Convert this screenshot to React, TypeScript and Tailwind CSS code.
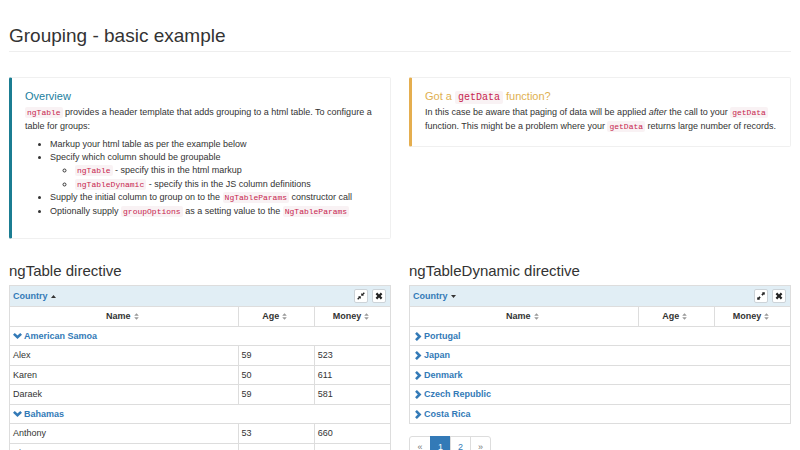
import { ReactNode } from 'react'
import clsx from 'clsx'

type Person = { name: string; age: number; money: number }
type Group = { name: string; people: Person[] }

const expandedGroups: Group[] = [
  {
    name: 'American Samoa',
    people: [
      { name: 'Alex', age: 59, money: 523 },
      { name: 'Karen', age: 50, money: 611 },
      { name: 'Daraek', age: 59, money: 581 },
    ],
  },
  {
    name: 'Bahamas',
    people: [
      { name: 'Anthony', age: 53, money: 660 },
      { name: 'Simon', age: 43, money: 675 },
    ],
  },
]

const collapsedGroups: Group[] = ['Portugal', 'Japan', 'Denmark', 'Czech Republic', 'Costa Rica'].map((name) => ({
  name,
  people: [],
}))

function Code({ children, large }: { children: ReactNode; large?: boolean }) {
  return (
    <code
      className={clsx(
        "rounded-[2px] bg-[#f9f2f4] py-px font-['Liberation_Mono',monospace] leading-none text-[#c7254e]",
        large ? 'px-[3px] text-[10px]' : 'px-[2px] text-[8px]',
      )}
    >
      {children}
    </code>
  )
}

function Callout({ title, tone, children }: { title: ReactNode; tone: 'info' | 'warning'; children: ReactNode }) {
  return (
    <section
      className={clsx(
        'self-start rounded-[2px] border border-l-3 border-[#f0f0f0] pt-[11px] pr-2 pl-[13px]',
        tone === 'info' ? 'border-l-[#1b7d92] pb-5' : 'border-l-[#e5ae4f] pb-[13px]',
      )}
    >
      <h4 className={clsx('text-[11px] leading-[14px]', tone === 'info' ? 'text-[#1b809e]' : 'text-[#e0b050]')}>
        {title}
      </h4>
      {children}
    </section>
  )
}

function SortIcon() {
  return (
    <svg className="ml-[3px] inline-block h-[7px] w-[5px]" viewBox="0 0 5 7" fill="#999" aria-hidden="true">
      <path d="M.2 2.8 2.5.2l2.3 2.6zM.2 4.2h4.6L2.5 6.8z" />
    </svg>
  )
}

function Chevron({ open }: { open: boolean }) {
  return (
    <svg
      className="h-[9px] w-[9px] shrink-0"
      viewBox="0 0 9 9"
      fill="none"
      stroke="#337ab7"
      strokeWidth="2.6"
      aria-hidden="true"
    >
      <path d={open ? 'M.9 1.9 4.5 5.3 8.1 1.9' : 'M3 .9 6.6 4.5 3 8.1'} />
    </svg>
  )
}

function ToolButton({ label, path }: { label: string; path: string }) {
  return (
    <button
      type="button"
      aria-label={label}
      className="flex size-[14px] items-center justify-center rounded-[2px] border border-[#ccd3d8] bg-white"
    >
      <svg className="size-2" viewBox="0 0 8 8" fill="#222" aria-hidden="true">
        <path d={path} />
      </svg>
    </button>
  )
}

const compressPath = 'M4.2 3.8V1l.9.9L6.8.2l1 1L6.1 2.9l.9.9zM3.8 4.2V7l-.9-.9-1.7 1.7-1-1 1.7-1.7-.9-.9z'
const expandPath = 'M7.8.2v2.9L7 2.3 5.6 3.7l-1.3-1.3L5.7 1 4.9.2zM.2 7.8V4.9l.8.8 1.4-1.4 1.3 1.3L2.3 7l.8.8z'
const closePath = 'M2.2.6 4 2.4 5.8.6l1.6 1.6L5.6 4l1.8 1.8-1.6 1.6L4 5.6 2.2 7.4.6 5.8 2.4 4 .6 2.2z'

function GroupedTable({ groups, open }: { groups: Group[]; open: boolean }) {
  const row = 'h-[19px] even:h-5'
  const cell = 'border border-[#ddd] px-[3px] py-0'

  return (
    <table className="w-full table-fixed border-collapse border border-[#ddd] text-[9px] leading-[13px]">
      <colgroup>
        <col className="w-3/5" />
        <col className="w-1/5" />
        <col className="w-1/5" />
      </colgroup>
      <thead>
        <tr className="h-[21px] bg-[#e1eef5]">
          <th colSpan={3} className={cell}>
            <div className="flex items-center gap-1 pr-px">
              <a href="#country" className="mr-auto flex items-center gap-[3px] text-[#337ab7]">
                Country
                <svg className="h-[3px] w-[5px]" viewBox="0 0 5 3" fill="#333" aria-hidden="true">
                  <path d={open ? 'M0 3 2.5 0 5 3z' : 'M0 0h5L2.5 3z'} />
                </svg>
              </a>
              <ToolButton label={open ? 'Collapse groups' : 'Expand groups'} path={open ? compressPath : expandPath} />
              <ToolButton label="Remove grouping" path={closePath} />
            </div>
          </th>
        </tr>
        <tr className="h-5">
          {['Name', 'Age', 'Money'].map((title) => (
            <th key={title} className="border border-[#ddd] py-0 pr-1.5 pl-[3px] text-center">
              {title}
              <SortIcon />
            </th>
          ))}
        </tr>
      </thead>
      <tbody>
        {groups.flatMap((group) => [
          <tr key={group.name} className={row}>
            <td colSpan={3} className={cell}>
              <a href="#group" className="flex items-center gap-[2px] font-bold text-[#337ab7]">
                <Chevron open={open} />
                {group.name}
              </a>
            </td>
          </tr>,
          ...group.people.map((person) => (
            <tr key={person.name} className={row}>
              <td className={cell}>{person.name}</td>
              <td className={cell}>{person.age}</td>
              <td className={cell}>{person.money}</td>
            </tr>
          )),
        ])}
      </tbody>
    </table>
  )
}

function Pagination() {
  return (
    <nav aria-label="Pages" className="mt-[12px] flex text-[9px] leading-[13px]">
      {['«', '1', '2', '»'].map((label) => (
        <a
          key={label}
          href="#page"
          className={clsx(
            '-ml-px flex h-[22px] w-[21px] items-center justify-center border first:ml-0 first:w-[22px] first:rounded-l-[3px] last:rounded-r-[3px]',
            label === '1' && 'border-[#337ab7] bg-[#337ab7] text-white',
            label === '2' && 'border-[#ddd] text-[#337ab7]',
            (label === '«' || label === '»') && 'border-[#ddd] text-[#777]',
          )}
        >
          {label}
        </a>
      ))}
    </nav>
  )
}

export default function App() {
  return (
    <main className="h-screen overflow-hidden bg-white px-[9px] pt-6 font-['Liberation_Sans',Arial,sans-serif] text-[9px] leading-[14px] text-[#333]">
      <h1 className="border-b border-[#eee] pb-1 text-[19px] leading-[23px]">Grouping - basic example</h1>

      <div className="mt-[25px] grid grid-cols-2 gap-x-[18px]">
        <Callout title="Overview" tone="info">
          <p className="mt-[2px]">
            <Code>ngTable</Code> provides a header template that adds grouping to a html table. To configure a table for
            groups:
          </p>
          <ul className="mt-[5px] list-disc pl-[25px] leading-[13px]">
            <li>Markup your html table as per the example below</li>
            <li>
              Specify which column should be groupable
              <ul className="list-[circle] pl-[25px]">
                <li>
                  <Code>ngTable</Code> - specify this in the html markup
                </li>
                <li className="leading-[14px]">
                  <Code>ngTableDynamic</Code> - specify this in the JS column definitions
                </li>
              </ul>
            </li>
            <li>
              Supply the initial column to group on to the <Code>NgTableParams</Code> constructor call
            </li>
            <li className="leading-[14px]">
              Optionally supply <Code>groupOptions</Code> as a setting value to the <Code>NgTableParams</Code>
            </li>
          </ul>
        </Callout>

        <Callout
          title={
            <>
              Got a <Code large>getData</Code> function?
            </>
          }
          tone="warning"
        >
          <p className="mt-[2px]">
            In this case be aware that paging of data will be applied <em>after</em> the call to your{' '}
            <Code>getData</Code> function. This might be a problem where your <Code>getData</Code> returns large number
            of records.
          </p>
        </Callout>
      </div>

      <div className="mt-[23px] grid grid-cols-2 gap-x-[18px]">
        <section>
          <h3 className="mb-1.5 text-[15px] leading-[17px]">ngTable directive</h3>
          <GroupedTable groups={expandedGroups} open />
        </section>
        <section>
          <h3 className="mb-1.5 text-[15px] leading-[17px]">ngTableDynamic directive</h3>
          <GroupedTable groups={collapsedGroups} open={false} />
          <Pagination />
        </section>
      </div>
    </main>
  )
}
